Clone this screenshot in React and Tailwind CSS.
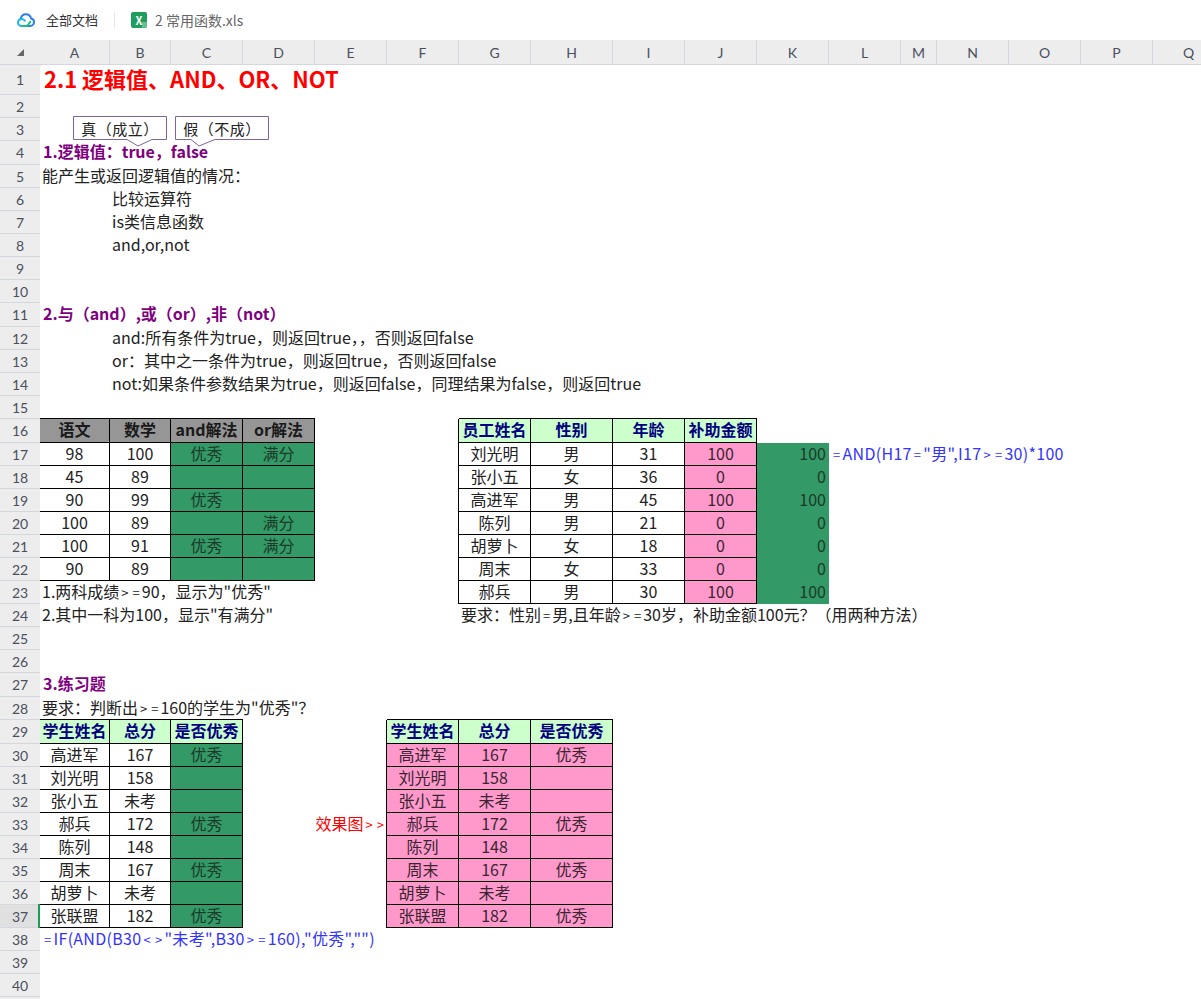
import React from 'react';

const colWidths = ['w-[70px]', 'w-[61px]', 'w-[72px]', 'w-[72px]', 'w-[72px]', 'w-[72px]', 'w-[72px]', 'w-[82px]', 'w-[72px]', 'w-[72px]', 'w-[72px]', 'w-[72px]', 'w-[36px]', 'w-[72px]', 'w-[72px]', 'w-[72px]', 'w-[72px]'];
const colNames = 'ABCDEFGHIJKLMNOPQ'.split('');

// column index of each letter
const C = Object.fromEntries(colNames.map((n, i) => [n, i]));

const box = 'border-r border-b border-black leading-[20px] text-center';
const head = `${box} bg-[#ccffcc] text-[#000080] font-bold`;
const grayHead = `${box} bg-[#969696] font-bold text-[#1a1a1a]`;
const body = `${box} text-[#222]`;
const green = `${box} bg-[#339966] text-[#1c3a2a]`;
const pink = `${box} bg-[#ff99cc] text-[#3a2530]`;
const kCell = 'bg-[#339966] text-right pr-[3px] text-[#1c3a2a] leading-[20px]';
const plain = 'text-[#222] pl-[2px] whitespace-nowrap leading-[21px]';
const purple = 'text-[#800080] font-bold pl-[3px] whitespace-nowrap leading-[21px]';
const blue = 'text-[#3333ff] pl-[2px] whitespace-nowrap leading-[21px] tracking-[0.3px]';
const topEdge = 'border-b border-black';
const leftEdge = 'border-r border-black';

const scores = [
  ['98', '100', '优秀', '满分'], ['45', '89', '', ''], ['90', '99', '优秀', ''],
  ['100', '89', '', '满分'], ['100', '91', '优秀', '满分'], ['90', '89', '', ''],
];
const staff = [
  ['刘光明', '男', '31', '100'], ['张小五', '女', '36', '0'], ['高进军', '男', '45', '100'], ['陈列', '男', '21', '0'],
  ['胡萝卜', '女', '18', '0'], ['周末', '女', '33', '0'], ['郝兵', '男', '30', '100'],
];
const students = [
  ['高进军', '167', '优秀'], ['刘光明', '158', ''], ['张小五', '未考', ''], ['郝兵', '172', '优秀'],
  ['陈列', '148', ''], ['周末', '167', '优秀'], ['胡萝卜', '未考', ''], ['张联盟', '182', '优秀'],
];

const rows = {
  4: { A: ['1.逻辑值：true，false', purple] },
  5: { A: ['能产生或返回逻辑值的情况：', plain] },
  6: { B: ['比较运算符', plain] },
  7: { B: ['is类信息函数', plain] },
  8: { B: ['and,or,not', plain] },
  11: { A: ['2.与（and）,或（or）,非（not）', purple] },
  12: { B: ['and:所有条件为true，则返回true，，否则返回false', plain] },
  13: { B: ['or：其中之一条件为true，则返回true，否则返回false', plain] },
  14: { B: ['not:如果条件参数结果为true，则返回false，同理结果为false，则返回true', plain] },
  15: {
    A: ['', topEdge], B: ['', topEdge], C: ['', topEdge], D: ['', topEdge],
    G: ['', topEdge], H: ['', topEdge], I: ['', topEdge], J: ['', topEdge],
  },
  16: {
    A: ['语文', grayHead], B: ['数学', grayHead], C: ['and解法', grayHead], D: ['or解法', grayHead],
    F: ['', leftEdge],
    G: ['员工姓名', head], H: ['性别', head], I: ['年龄', head], J: ['补助金额', head],
  },
  23: { A: ['1.两科成绩>=90，显示为"优秀"', plain] },
  24: { A: ['2.其中一科为100，显示"有满分"', plain], G: ['要求：性别=男,且年龄>=30岁，补助金额100元？（用两种方法）', plain] },
  27: { A: ['3.练习题', purple] },
  28: {
    A: ['要求：判断出>=160的学生为"优秀"？', `${plain} ${topEdge}`],
    B: ['', topEdge], C: ['', topEdge],
    F: ['', topEdge], G: ['', topEdge], H: ['', topEdge],
  },
  29: {
    A: ['学生姓名', head], B: ['总分', head], C: ['是否优秀', head],
    E: ['', leftEdge],
    F: ['学生姓名', head], G: ['总分', head], H: ['是否优秀', head],
  },
  38: { A: ['=IF(AND(B30<>"未考",B30>=160),"优秀","")', blue] },
};

staff.forEach((s, i) => {
  const r = 17 + i;
  rows[r] = {
    ...rows[r],
    F: ['', leftEdge],
    G: [s[0], body], H: [s[1], body], I: [s[2], body], J: [s[3], pink], K: [s[3], kCell],
  };
});
scores.forEach((t, i) => {
  const r = 17 + i;
  rows[r] = { ...rows[r], A: [t[0], body], B: [t[1], body], C: [t[2], green], D: [t[3], green] };
});
rows[17].L = ['=AND(H17="男",I17>=30)*100', blue];

students.forEach((s, i) => {
  const r = 30 + i;
  rows[r] = {
    E: ['', leftEdge],
    A: [s[0], body], B: [s[1], body], C: [s[2], green],
    F: [s[0], pink], G: [s[1], pink], H: [s[2], pink],
  };
});
rows[33].E = ['效果图>>', `${leftEdge} text-[#ff0000] text-right whitespace-nowrap leading-[20px]`];

function rowHeight(r) {
  if (r === 1) return 'h-[30px]';
  if ([4, 11, 16, 27, 29].includes(r)) return 'h-[24px]';
  return 'h-[23px]';
}

// comparison signs are small and widely spaced in the sheet font
function Label({ text }) {
  return text.split(/([<>=])/).map((part, i) =>
    /^[<>=]$/.test(part) ? <span key={i} className="text-[13px] px-[2px]">{part}</span> : part
  );
}

function Cell({ r, name }) {
  const cell = rows[r] && rows[r][name];
  const width = colWidths[C[name]];
  if (!cell) return <div className={`${width} shrink-0`} />;
  return (
    <div className={`${width} shrink-0 h-full ${cell[1]} ${cell[0] && cell[1].includes('text-right') ? 'flex justify-end' : ''}`}>
      {cell[0] && <span><Label text={cell[0]} /></span>}
    </div>
  );
}

function CloudLogo() {
  return (
    <svg width="18" height="15" viewBox="0 0 18 15" fill="none">
      <path d="M3.6 6.2C4.2 3 6.4 1.2 8.9 1.2c2.4 0 4.5 1.6 5.2 4.2C15.9 5.7 17 7.3 17 9.1c0 2.2-1.7 3.9-3.9 3.9H9.5" stroke="#2b7bf3" strokeWidth="2" strokeLinecap="round" />
      <path d="M9.5 13H4.6C2.6 13 1 11.5 1 9.5s1.6-3.5 3.6-3.5c1.4 0 2.4.7 3.3 1.7" stroke="#1cb6ea" strokeWidth="2" strokeLinecap="round" />
      <path d="M5.5 13h3.2c1.2 0 1.9-.6 2.6-1.5l1.9-2.6" stroke="#17c47a" strokeWidth="2" strokeLinecap="round" />
    </svg>
  );
}

function Bubble({ className, text, outline }) {
  return (
    <div className={`absolute w-[94px] h-[31px] ${className}`}>
      <svg width="94" height="31" viewBox="0 0 94 31" className="absolute left-0 top-0">
        <path d={outline} fill="#fff" stroke="#8064a2" strokeWidth="1" />
      </svg>
      <div className="absolute left-0 top-0 w-full h-[24px] leading-[26px] text-center text-[15px] tracking-[0.5px] text-[#222]">{text}</div>
    </div>
  );
}

export default function App() {
  const rowNums = Array.from({ length: 40 }, (_, i) => i + 1);
  return (
    <div className="w-[1201px] h-[999px] overflow-hidden bg-white text-[16px] font-['Noto_Sans_CJK_SC','Noto_Sans',sans-serif]">
      <div className="h-[40px] flex items-center pl-[17px]">
        <CloudLogo />
        <span className="ml-[11px] text-[13px] text-[#333]">全部文档</span>
        <span className="ml-[16px] w-px h-[16px] bg-[#e5e5e5]" />
        <span className="relative ml-[16px] w-[16px] h-[16px] rounded-[2px] overflow-hidden bg-[#1f9d5c] text-white text-[11px] font-bold leading-[16px] text-center">
          <span className="absolute right-0 bottom-0 w-[5px] h-[6px] bg-[#62bd8f]" />
          <span className="relative">X</span>
        </span>
        <span className="ml-[8px] text-[14px] text-[#666]">2 常用函数.xls</span>
      </div>
      <div className="h-[25px] flex bg-[#ededed] border-b border-[#d4d7de] text-[14px] text-[#4a5060] font-['Lato',sans-serif]">
        <div className="w-[40px] shrink-0 flex items-center justify-center">
          <svg width="9" height="9" viewBox="0 0 9 9"><path d="M8 1v7H1z" fill="#666" /></svg>
        </div>
        {colNames.map((n, i) => (
          <div key={n} className={`${colWidths[i]} shrink-0 flex items-center justify-center border-r border-[#d4d7de]`}>{n}</div>
        ))}
      </div>
      <div className="flex h-[934px] bg-[#ededed]">
        <div className="w-[40px] shrink-0 text-[#4a5060] text-[14px] font-['Lato',sans-serif]">
          {rowNums.map((r) => (
            <div key={r} className={`${rowHeight(r)} flex items-center justify-center border-b border-[#d4d7de] ${r === 37 ? 'bg-[#e0e0e0]' : ''}`}>{r}</div>
          ))}
        </div>
        <div className="relative flex-1 bg-white rounded-tl-[4px]">
          {rowNums.map((r) => (
            <div key={r} className={`${rowHeight(r)} flex`}>
              {r === 1 ? (
                <div className="pl-[4px] text-[22px] font-bold text-[#ff0000] leading-[26px] whitespace-nowrap">2.1 逻辑值、AND、OR、NOT</div>
              ) : (
                colNames.map((n) => <Cell key={n} r={r} name={n} />)
              )}
            </div>
          ))}
          <Bubble className="left-[33px] top-[51px]" text="真（成立）" outline="M.5.5h93v23H79L65 30 54 23.5H.5z" />
          <Bubble className="left-[135px] top-[51px]" text="假（不成）" outline="M.5.5h93v23H40L24 30 16 23.5H.5z" />
          <div className="absolute left-[-2px] top-[839px] h-[24px] w-[2px] bg-[#1a9d5a]" />
        </div>
      </div>
    </div>
  );
}
